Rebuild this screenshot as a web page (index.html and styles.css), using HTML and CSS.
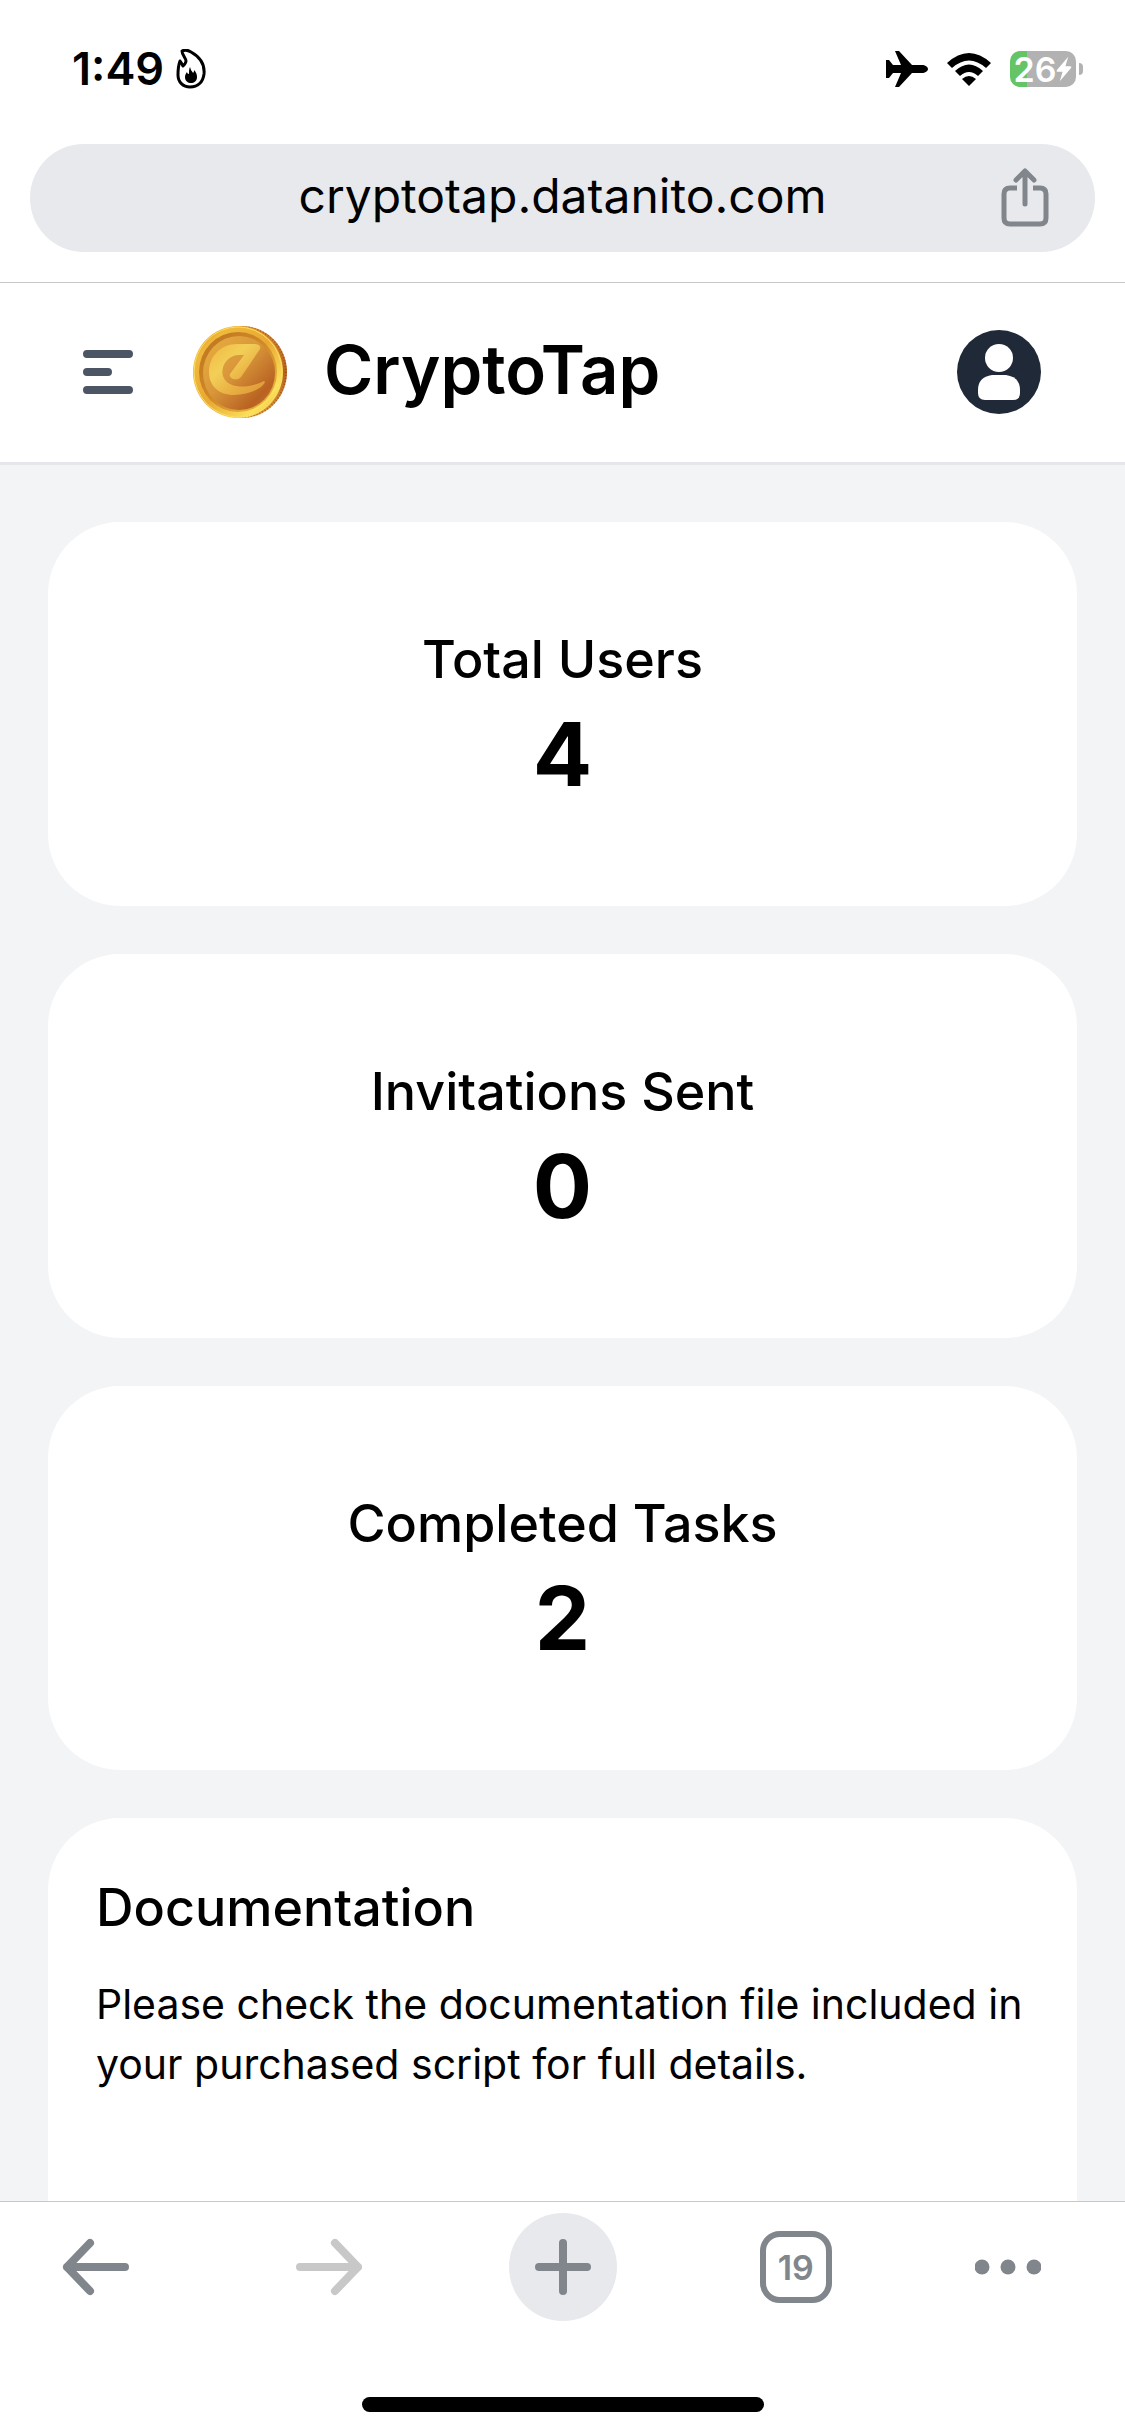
FILE: index.html
```html
<!DOCTYPE html>
<html lang="en">
<head>
<meta charset="utf-8">
<meta name="viewport" content="width=device-width, initial-scale=1">
<title>CryptoTap</title>
<link rel="stylesheet" href="styles.css">
</head>
<body>
<div class="status-bar">
  <div class="status-left">
    <span class="clock">1:49</span>
    <svg class="flame" viewBox="0 0 30 40" aria-hidden="true">
      <path d="M6 2C8 1 12 1 15 3C24 8 29 15 28 25C27 33 22 38 14 38C7 38 2 33 2 26C2 22 2 17 4 12C5 13 6 15 7 17C9 15 10 14 10 12C10 9 6 6 6 2Z" fill="none" stroke="#000" stroke-width="3" stroke-linejoin="round"/>
      <path d="M14 18C15 22 16 22 17 24C18 23 18 22 18 21C20 23 21 25 21 28C21 32 18 34 15 34C12 34 9 32 9 28C9 26 10 24 11 23C11 24 12 25 13 25C13 22 13 20 14 18Z" fill="#000"/>
    </svg>
  </div>
  <div class="status-right">
    <svg class="plane" viewBox="0 0 42 38" aria-hidden="true">
      <path d="M9 1H13L26 15H36C39 15 42 17 42 19C42 21 39 23 36 23H26L13 37H9L15 23H7L3 28H0V10H3L7 15H15Z"/>
    </svg>
    <svg class="wifi" viewBox="0 0 46 34" aria-hidden="true">
      <path d="M1 11Q23 -9 45 11L40 16Q23 1 6 16Z"/>
      <path d="M9 19Q23 6 37 19L32 24Q23 16 14 24Z"/>
      <path d="M16 27Q23 21 30 27L23 34Z"/>
    </svg>
    <div class="battery">
      <div class="battery-body">26<svg class="bolt" viewBox="0 0 17 26" aria-hidden="true"><path d="M13 0L1 14Q0 16 2 16H7L4 26L16 12Q17 10 15 10H10Z" fill="#fff"/></svg></div>
      <div class="battery-tip"></div>
    </div>
  </div>
</div>

<div class="address-row">
  <div class="address">
    <span class="address-text">cryptotap.datanito.com</span>
    <button class="share" type="button" aria-label="Share">
      <svg viewBox="0 0 48 60" fill="none" stroke="#80868b" stroke-width="5" aria-hidden="true">
        <path d="M16 20H9Q3 20 3 26V50Q3 56 9 56H39Q45 56 45 50V26Q45 20 39 20H32"/>
        <path d="M24 36V4M15 12L24 3L33 12" stroke-linecap="round" stroke-linejoin="round"/>
      </svg>
    </button>
  </div>
</div>

<header class="app-header">
  <button class="menu" type="button" aria-label="Open menu">
    <svg viewBox="0 0 72 72" stroke="#4b5563" stroke-width="8" stroke-linecap="round" aria-hidden="true">
      <path d="M15 18H57M15 36H36M15 54H57"/>
    </svg>
  </button>
  <a class="brand" href="#">
    <svg class="coin" viewBox="0 0 96 96" aria-hidden="true">
      <defs>
        <linearGradient id="edge" x1="0" y1="0" x2="0" y2="1"><stop offset="0" stop-color="#d98a2b"/><stop offset=".5" stop-color="#b8601f"/><stop offset="1" stop-color="#e0a03a"/></linearGradient>
        <linearGradient id="rim" x1="0" y1="0" x2="1" y2="1"><stop offset="0" stop-color="#d98d24"/><stop offset=".2" stop-color="#f0b93c"/><stop offset=".5" stop-color="#e9a832"/><stop offset=".8" stop-color="#fbe15c"/><stop offset="1" stop-color="#e3a02e"/></linearGradient>
        <linearGradient id="ring" x1="0" y1="0" x2="1" y2="1"><stop offset="0" stop-color="#bd7420"/><stop offset=".5" stop-color="#d08a27"/><stop offset="1" stop-color="#f0bd42"/></linearGradient>
        <linearGradient id="face" x1="0" y1="0" x2="1" y2="1"><stop offset="0" stop-color="#eab040"/><stop offset=".45" stop-color="#d8963a"/><stop offset=".8" stop-color="#b96222"/><stop offset="1" stop-color="#c9782a"/></linearGradient>
        <linearGradient id="letter" x1="0" y1="0" x2="1" y2="1"><stop offset="0" stop-color="#eeb83f"/><stop offset=".35" stop-color="#f3cf58"/><stop offset=".65" stop-color="#e9b043"/><stop offset="1" stop-color="#dc9438"/></linearGradient>
      </defs>
      <ellipse cx="50" cy="48" rx="45" ry="46" fill="url(#edge)"/>
      <ellipse cx="50" cy="48" rx="44" ry="45" fill="none" stroke="#8c451b" stroke-width="2" stroke-dasharray="1 2" opacity=".6"/>
      <ellipse cx="46" cy="48" rx="45" ry="46" fill="url(#rim)"/>
      <ellipse cx="46" cy="48" rx="44" ry="45" fill="none" stroke="#f9dd62" stroke-width="1"/>
      <ellipse cx="46" cy="48" rx="39" ry="40" fill="url(#ring)"/>
      <ellipse cx="47" cy="49" rx="36" ry="37" fill="url(#face)"/>
      <path d="M72 57C58 64 40 65 33 56C26 46 34 31 47 31H52L38 50C36 54 45 58 49 53L68 25C69 22 67 20 62 20H45C28 20 17 33 17 48C17 62 27 71 42 71C56 71 70 65 73 58Z" fill="url(#letter)"/>
    </svg>
    <span class="brand-name">CryptoTap</span>
  </a>
  <button class="avatar" type="button" aria-label="Account">
    <svg viewBox="0 0 84 84" aria-hidden="true">
      <circle cx="42" cy="42" r="42" fill="#1f2937"/>
      <circle cx="42" cy="28" r="14" fill="#fff"/>
      <path d="M35 45H49Q63 47 63 60V63Q63 70 56 70H28Q21 70 21 63V60Q21 47 35 45Z" fill="#fff"/>
    </svg>
  </button>
</header>

<main class="content">
  <section class="card stat">
    <h2 class="card-title">Total Users</h2>
    <p class="stat-value">4</p>
  </section>
  <section class="card stat">
    <h2 class="card-title">Invitations Sent</h2>
    <p class="stat-value">0</p>
  </section>
  <section class="card stat">
    <h2 class="card-title">Completed Tasks</h2>
    <p class="stat-value">2</p>
  </section>
  <section class="card doc">
    <h2 class="card-title">Documentation</h2>
    <p class="doc-text">Please check the documentation file included in your purchased script for full details.</p>
  </section>
</main>

<footer class="browser-bar">
  <nav class="tools" aria-label="Browser">
    <button class="tool" type="button" aria-label="Back">
      <svg viewBox="0 0 72 72" fill="none" stroke="#80868b" stroke-width="8" stroke-linecap="round" stroke-linejoin="round" aria-hidden="true"><path d="M65 36H7M30 12L7 36L30 60"/></svg>
    </button>
    <button class="tool" type="button" aria-label="Forward" disabled>
      <svg viewBox="0 0 72 72" fill="none" stroke="#c8c8c8" stroke-width="8" stroke-linecap="round" stroke-linejoin="round" aria-hidden="true"><path d="M7 36H65M42 12L65 36L42 60"/></svg>
    </button>
    <button class="tool new-tab" type="button" aria-label="New tab">
      <svg viewBox="0 0 72 72" stroke="#80868b" stroke-width="8" stroke-linecap="round" aria-hidden="true"><path d="M12 36H60M36 12V60"/></svg>
    </button>
    <button class="tool" type="button" aria-label="Open tabs"><span class="tab-count">19</span></button>
    <button class="tool more" type="button" aria-label="More">
      <svg viewBox="0 0 66 72" fill="#80868b" aria-hidden="true"><circle cx="7" cy="36" r="7.5"/><circle cx="33" cy="36" r="7.5"/><circle cx="59" cy="36" r="7.5"/></svg>
    </button>
  </nav>
  <div class="home-indicator"></div>
</footer>
</body>
</html>
```
FILE: styles.css
```css
* {
  box-sizing: border-box;
}

body {
  margin: 0;
  height: 100vh;
  display: flex;
  flex-direction: column;
  background: #fff;
  color: #000;
  font-family: Inter, "Liberation Sans", sans-serif;
}

button {
  padding: 0;
  border: 0;
  background: none;
  font: inherit;
  color: inherit;
}

svg {
  display: block;
}

h2,
p {
  margin: 0;
}

/* Phone status bar */
.status-bar {
  flex: none;
  height: 144px;
  padding: 42px 42px 48px 72px;
  display: flex;
  align-items: center;
  justify-content: space-between;
}

.status-left,
.status-right {
  display: flex;
  align-items: center;
}

.status-left {
  gap: 12px;
}

.status-right {
  gap: 18px;
}

.clock {
  font-size: 45px;
  line-height: 54px;
  font-weight: 600;
}

.flame {
  width: 30px;
  height: 40px;
}

.plane {
  width: 42px;
  height: 38px;
}

.wifi {
  width: 46px;
  height: 34px;
}

.battery {
  display: flex;
  align-items: center;
  gap: 3px;
}

.battery-body {
  width: 66px;
  height: 36px;
  border-radius: 10px;
  display: flex;
  align-items: center;
  justify-content: center;
  background: linear-gradient(to right, #65c466 26%, #b2b2b2 26%);
  color: #fff;
  font-size: 34px;
  font-weight: 600;
}

.bolt {
  width: 16px;
  height: 26px;
}

.battery-tip {
  width: 4px;
  height: 12px;
  border-radius: 0 4px 4px 0;
  background: #b2b2b2;
}

/* Address bar */
.address-row {
  flex: none;
  padding: 0 30px 30px;
  border-bottom: 1px solid #c8c8c8;
}

.address {
  height: 108px;
  padding: 0 46px;
  border-radius: 54px;
  display: grid;
  grid-template-columns: 48px 1fr 48px;
  align-items: center;
  background: #e8e9ed;
}

.address-text {
  grid-column: 2;
  padding-bottom: 6px;
  text-align: center;
  font-size: 48px;
}

.share svg {
  width: 48px;
  height: 60px;
}

/* App header */
.app-header {
  flex: none;
  height: 182px;
  padding: 0 84px 2px 72px;
  border-bottom: 3px solid #e5e7eb;
  display: flex;
  align-items: center;
  gap: 48px;
}

.menu svg {
  width: 72px;
  height: 72px;
}

.brand {
  display: flex;
  align-items: center;
  gap: 36px;
  color: inherit;
  text-decoration: none;
}

.coin {
  width: 96px;
  height: 96px;
}

.brand-name {
  padding-bottom: 4px;
  font-size: 67px;
  line-height: 96px;
  font-weight: 600;
}

.avatar {
  margin-left: auto;
}

.avatar svg {
  width: 84px;
  height: 84px;
}

/* Dashboard */
.content {
  flex: 1;
  min-height: 0;
  overflow-y: auto;
  scrollbar-width: none;
  padding: 57px 48px;
  display: flex;
  flex-direction: column;
  gap: 48px;
  background: #f3f4f6;
}

.card {
  flex: none;
  border-radius: 72px;
  background: #fff;
}

.stat {
  padding: 96px 48px;
  text-align: center;
}

.card-title {
  font-size: 52px;
  line-height: 84px;
  font-weight: 500;
}

.stat-value {
  padding-bottom: 4px;
  font-size: 88px;
  line-height: 104px;
  font-weight: 700;
}

.doc {
  padding: 48px 48px 240px;
}

.doc-text {
  margin-top: 24px;
  font-size: 41px;
  line-height: 60px;
}

/* Browser toolbar */
.browser-bar {
  flex: none;
  padding: 11px 0 24px;
  border-top: 1px solid #c8c8c8;
  background: #fff;
}

.tools {
  padding: 0 84px 0 42px;
  display: flex;
  align-items: center;
  justify-content: space-between;
}

.tool {
  width: 108px;
  height: 108px;
  display: flex;
  align-items: center;
  justify-content: center;
}

.tool svg {
  width: 72px;
  height: 72px;
}

.new-tab {
  border-radius: 54px;
  background: #e8e9ed;
}

.more,
.more svg {
  width: 66px;
}

.tab-count {
  width: 72px;
  height: 72px;
  border: 6px solid #80868b;
  border-radius: 20px;
  display: flex;
  align-items: center;
  justify-content: center;
  color: #80868b;
  font-size: 34px;
  font-weight: 600;
}

.home-indicator {
  width: 402px;
  max-width: 80%;
  height: 15px;
  margin: 76px auto 0;
  border-radius: 8px;
  background: #000;
}
```
